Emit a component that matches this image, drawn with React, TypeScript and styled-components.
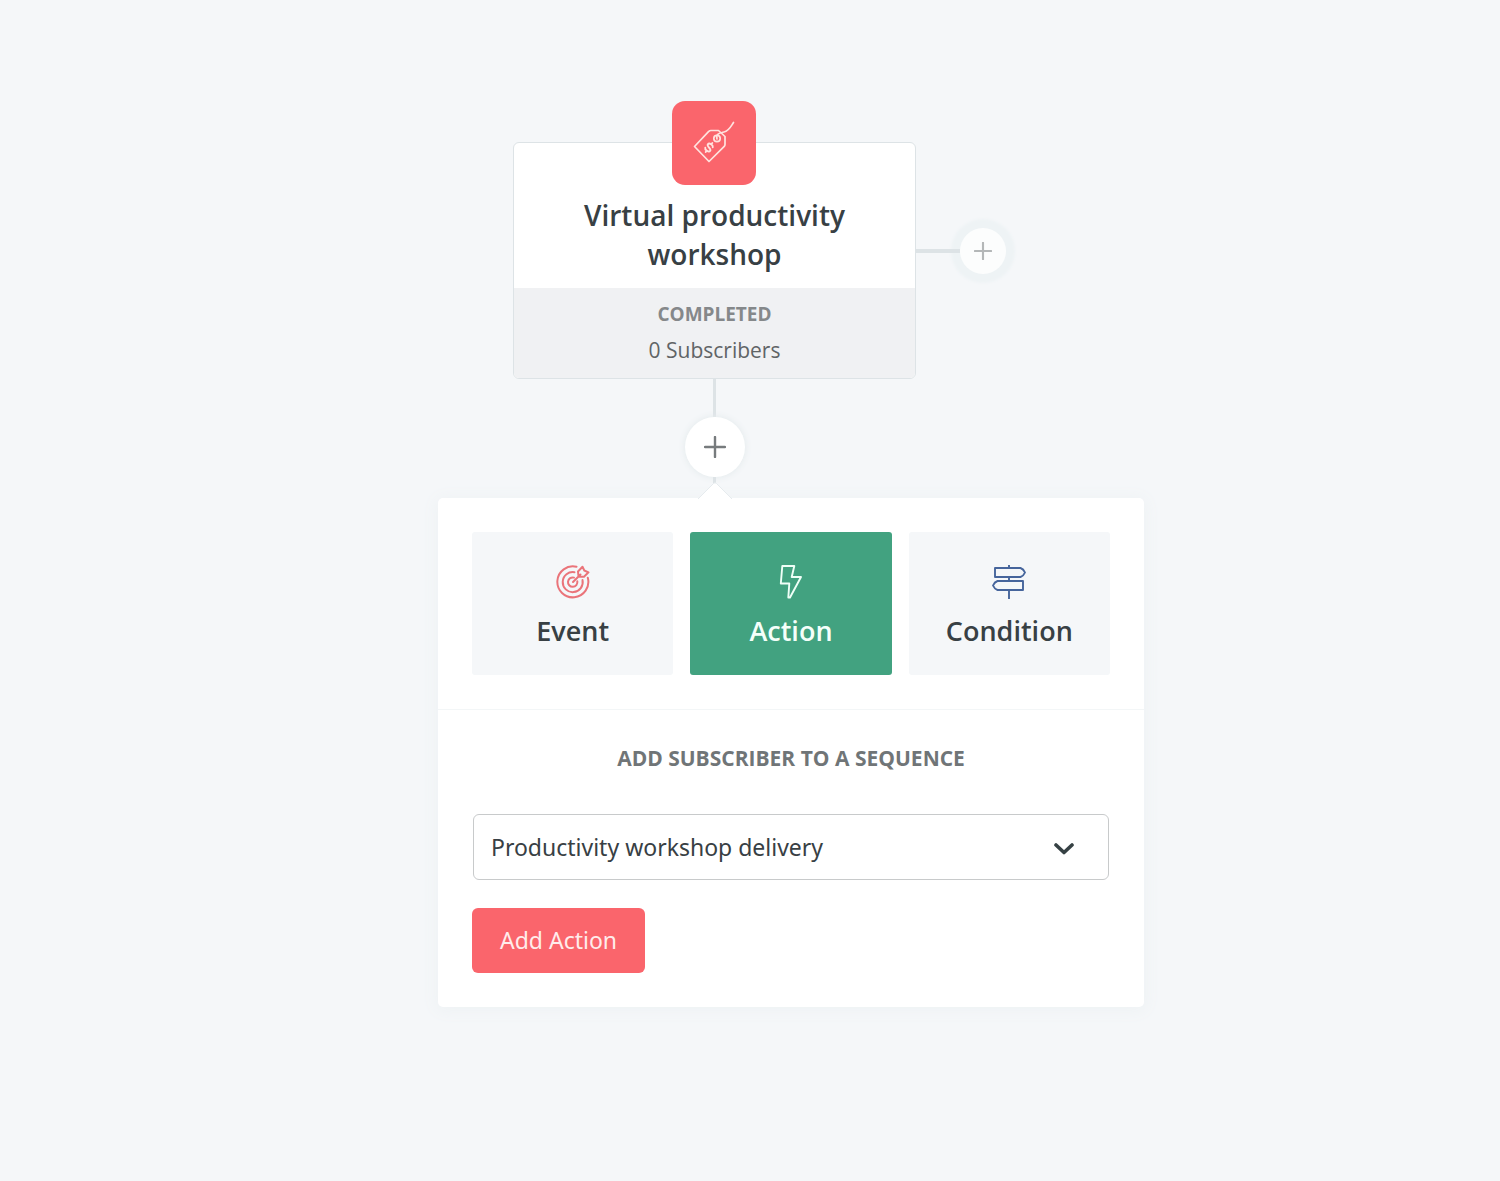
import React, { useState } from "react";
import styled, { createGlobalStyle } from "styled-components";

const colors = {
  canvas: "#f5f7f9",
  ink: "#384044",
  coral: "#fa656c",
  green: "#42a280",
  navy: "#46659c",
  line: "#dde3e6",
};

const controlFont = `"Noto Sans", "Open Sans", sans-serif`;

const GlobalStyle = createGlobalStyle`
  *, *::before, *::after { box-sizing: border-box; }
  body {
    margin: 0;
    background: ${colors.canvas};
    color: ${colors.ink};
    font-family: "Open Sans", "Noto Sans", sans-serif;
  }
  button, select { font: inherit; color: inherit; }
  h1, h2, p { margin: 0; }
`;

const Canvas = styled.main`
  display: flex;
  justify-content: center;
  min-height: 100vh;
  padding: 142px 0 96px 82px;
`;

const Flow = styled.div`
  width: 706px;
  max-width: 100%;
`;

const NodeRow = styled.div`
  display: flex;
  align-items: center;
  padding-left: 75px;
`;

const NodeCard = styled.article`
  position: relative;
  flex: 0 0 403px;
  border: 1px solid ${colors.line};
  border-radius: 6px;
  background: #fff;
  text-align: center;
`;

const NodeBadge = styled.div`
  position: absolute;
  top: -42px;
  left: calc(50% - 43px);
  display: grid;
  place-items: center;
  width: 84px;
  height: 84px;
  border-radius: 13px;
  background: ${colors.coral};
`;

const NodeTitle = styled.h1`
  padding: 53px 56px 14px;
  font-size: 28px;
  font-weight: 600;
  line-height: 39px;
`;

const NodeStatus = styled.div`
  padding: 8px 16px 10px;
  border-radius: 0 0 5px 5px;
  background: #f0f1f3;
  line-height: 36px;
`;

const StatusLabel = styled.p`
  color: #85888a;
  font-size: 19px;
  font-weight: 700;
  text-transform: uppercase;
`;

const StatusValue = styled.p`
  color: #606466;
  font-size: 21px;
`;

const SideBranch = styled.div`
  display: flex;
  align-items: center;
  padding-bottom: 20px;
`;

const SideLine = styled.span`
  position: relative;
  z-index: 1;
  width: 44px;
  height: 4px;
  background: ${colors.line};
`;

const AddStep = styled.button<{ $muted?: boolean }>`
  display: grid;
  place-items: center;
  width: ${(p) => (p.$muted ? 46 : 60)}px;
  height: ${(p) => (p.$muted ? 46 : 60)}px;
  padding: 0;
  border: 0;
  border-radius: 50%;
  background: ${(p) => (p.$muted ? "#fcfdfd" : "#fff")};
  color: ${(p) => (p.$muted ? "#b4b7b8" : "#777b7d")};
  box-shadow: ${(p) => (p.$muted ? "0 0 3px 9px #eef3f5" : "0 0 6px 1px #e6ecee")};
  cursor: pointer;
`;

const Stem = styled.div`
  display: flex;
  flex-direction: column;
  align-items: center;
  width: 403px;
  margin-left: 75px;
`;

const StemLine = styled.span<{ $length: number }>`
  width: 3px;
  height: ${(p) => p.$length}px;
  background: ${colors.line};
`;

const Panel = styled.section`
  position: relative;
  border-radius: 5px;
  background: #fff;
  box-shadow: 0 2px 16px 2px #eef2f4;
`;

const PanelArrow = styled.svg`
  position: absolute;
  top: -16px;
  left: 260px;
`;

const StepTypes = styled.div`
  display: grid;
  grid-template-columns: repeat(3, 1fr);
  gap: 17px;
  padding: 34px;
  border-bottom: 1px solid #f3f6f7;
`;

const StepType = styled.button`
  display: flex;
  flex-direction: column;
  align-items: center;
  gap: 12px;
  height: 143px;
  padding: 33px 8px 0;
  border: 0;
  border-radius: 3px;
  background: #f5f7f9;
  font-size: 27px;
  font-weight: 600;
  line-height: 39px;
  cursor: pointer;

  &[aria-pressed="true"] {
    background: ${colors.green};
    color: #f5fffa;
  }
`;

const StepForm = styled.form`
  display: flex;
  flex-direction: column;
  align-items: flex-start;
  padding: 34px;
`;

const FieldLabel = styled.label`
  align-self: stretch;
  margin-bottom: 42px;
  color: #707577;
  font-size: 21px;
  font-weight: 700;
  line-height: 28px;
  text-align: center;
  text-transform: uppercase;
`;

const SelectBox = styled.div`
  display: grid;
  align-items: center;
  align-self: stretch;
  margin: 0 1px 28px;

  > * { grid-area: 1 / 1; }
  > svg {
    justify-self: end;
    margin: 4px 35px 0 0;
    pointer-events: none;
  }
`;

const Select = styled.select`
  width: 100%;
  height: 66px;
  padding: 0 64px 0 17px;
  border: 1px solid #c8cacb;
  border-radius: 6px;
  appearance: none;
  background: #fff;
  font-family: ${controlFont};
  font-size: 23px;
`;

const Submit = styled.button`
  height: 65px;
  padding: 0 28px 2px;
  border: 0;
  border-radius: 6px;
  background: ${colors.coral};
  color: #ffeceb;
  font-family: ${controlFont};
  font-size: 23px;
  cursor: pointer;
`;

const Plus = ({ size, weight }: { size: number; weight: number }) => (
  <svg width={size} height={size} viewBox="0 0 22 22" stroke="currentColor" strokeWidth={weight} strokeLinecap="round" aria-hidden>
    <path d="M11 1v20M1 11h20" />
  </svg>
);

const PriceTag = () => (
  <svg width="44" height="44" viewBox="0 0 44 44" fill="none" stroke="#ffe3df" strokeWidth="1.7" strokeLinejoin="round" strokeLinecap="round" aria-hidden>
    <path d="M2.500 25.500 16.500 10.700Q17.700 9.500 19 9.500H26.500L33 15.500V23.500Q33 24.700 32 25.700L17 40.500Z" />
    <circle cx="25" cy="17.500" r="3.200" />
    <path d="M25 18C23.500 12.500 28 12 32 11C37 10 38.500 6 41.500 1.500" />
    <g transform="translate(17 26.500) rotate(36)" strokeWidth="1.900">
      <path d="M2.900 -2.400C2.300 -4.300 -2.800 -4.500 -2.800 -1.900C-2.800 .5 2.900 -.5 2.900 1.900C2.900 4.500 -2.300 4.300 -2.900 2.400" />
      <path d="M0 -5.600V-4M0 4V5.600" />
    </g>
  </svg>
);

const TargetIcon = () => (
  <svg width="34" height="34" viewBox="0 0 34 34" fill="none" stroke="#ea747a" strokeWidth="2" strokeLinecap="round" strokeLinejoin="round" aria-hidden>
    <path d="M20.500 1.800A15.500 15.500 0 1 0 31.800 12.800" />
    <path d="M18.500 7.300A10 10 0 1 0 26.500 15" />
    <path d="M18 12.600A4.700 4.700 0 1 0 21.300 16.200" />
    <path d="M17 17 24.500 9.500M22.500 11.500 22 6.500 26.500 1.800 28.300 5.500 32.500 7.300 28 11.700Z" />
  </svg>
);

const BoltIcon = () => (
  <svg width="34" height="34" viewBox="0 0 34 34" fill="none" stroke="#effff7" strokeWidth="1.900" strokeLinejoin="round" aria-hidden>
    <path d="M8.300 1H20.300L17.700 12H27L16 32.500H14.300L15.300 18.500H6.800Z" />
  </svg>
);

const SignpostIcon = () => (
  <svg width="34" height="34" viewBox="0 0 34 34" fill="none" stroke={colors.navy} strokeWidth="1.900" strokeLinejoin="round" aria-hidden>
    <path d="M17 0V3M17 12V16M17 25V34" />
    <path d="M3 3H28.500Q31.500 4 33 7.500Q31.500 11 28.500 12H3Z" />
    <path d="M31 16H5.500Q2.500 17 1 20.500Q2.500 24 5.500 25H31Z" />
  </svg>
);

const Chevron = () => (
  <svg width="20" height="12" viewBox="0 0 20 12" fill="none" stroke="#364144" strokeWidth="3.600" strokeLinecap="round" strokeLinejoin="round" aria-hidden>
    <path d="M2 2 10 9.500 18 2" />
  </svg>
);

const stepTypes = [
  { name: "Event", Icon: TargetIcon },
  { name: "Action", Icon: BoltIcon },
  { name: "Condition", Icon: SignpostIcon },
];

export default function App() {
  const [active, setActive] = useState("Action");

  return (
    <>
      <GlobalStyle />
      <Canvas>
        <Flow>
          <NodeRow>
            <NodeCard>
              <NodeBadge>
                <PriceTag />
              </NodeBadge>
              <NodeTitle>Virtual productivity workshop</NodeTitle>
              <NodeStatus>
                <StatusLabel>Completed</StatusLabel>
                <StatusValue>0 Subscribers</StatusValue>
              </NodeStatus>
            </NodeCard>
            <SideBranch>
              <SideLine />
              <AddStep $muted type="button" aria-label="Add a branch">
                <Plus size={18} weight={2.6} />
              </AddStep>
            </SideBranch>
          </NodeRow>
          <Stem>
            <StemLine $length={38} />
            <AddStep type="button" aria-label="Add a step">
              <Plus size={22} weight={2.4} />
            </AddStep>
            <StemLine $length={21} />
          </Stem>
          <Panel>
            <PanelArrow width="34" height="17" viewBox="0 0 34 17" aria-hidden>
              <path d="M0 17 15.500 1.500Q17 0 18.500 1.500L34 17Z" fill="#fff" />
              <path d="M0 17 15.500 1.500Q17 0 18.500 1.500L34 17" fill="none" stroke="#e6ebee" />
            </PanelArrow>
            <StepTypes>
              {stepTypes.map(({ name, Icon }) => (
                <StepType key={name} type="button" aria-pressed={active === name} onClick={() => setActive(name)}>
                  <Icon />
                  {name}
                </StepType>
              ))}
            </StepTypes>
            <StepForm onSubmit={(e) => e.preventDefault()}>
              <FieldLabel htmlFor="sequence">Add subscriber to a sequence</FieldLabel>
              <SelectBox>
                <Select id="sequence">
                  <option>Productivity workshop delivery</option>
                </Select>
                <Chevron />
              </SelectBox>
              <Submit type="submit">Add Action</Submit>
            </StepForm>
          </Panel>
        </Flow>
      </Canvas>
    </>
  );
}
